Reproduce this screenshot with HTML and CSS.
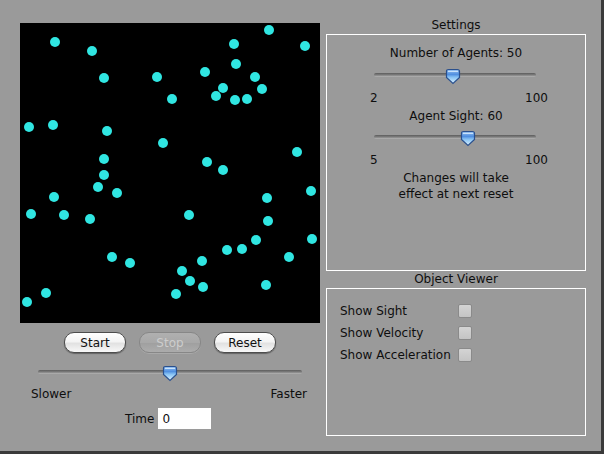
FILE: index.html
```html
<!DOCTYPE html>
<html>
<head>
<meta charset="utf-8">
<link rel="stylesheet" href="styles.css">
</head>
<body>
<div class="window">
  <div class="left">
    <div class="world">
      <svg width="300" height="300" viewBox="0 0 300 300">
        <g fill="#30e6e2">
          <circle cx="35" cy="19" r="5"/><circle cx="72" cy="28" r="5"/><circle cx="84" cy="55" r="5"/>
          <circle cx="137" cy="54" r="5"/><circle cx="152" cy="76" r="5"/><circle cx="214" cy="21" r="5"/>
          <circle cx="249" cy="7" r="5"/><circle cx="285" cy="23" r="5"/><circle cx="216" cy="41" r="5"/>
          <circle cx="185" cy="49" r="5"/><circle cx="235" cy="54" r="5"/><circle cx="203" cy="65" r="5"/>
          <circle cx="242" cy="66" r="5"/><circle cx="196" cy="73" r="5"/><circle cx="215" cy="77" r="5"/>
          <circle cx="227" cy="76" r="5"/><circle cx="9" cy="104" r="5"/><circle cx="33" cy="102" r="5"/>
          <circle cx="87" cy="108" r="5"/><circle cx="143" cy="120" r="5"/><circle cx="277" cy="129" r="5"/>
          <circle cx="187" cy="139" r="5"/><circle cx="203" cy="147" r="5"/><circle cx="84" cy="136" r="5"/>
          <circle cx="84" cy="152" r="5"/><circle cx="78" cy="164" r="5"/><circle cx="97" cy="170" r="5"/>
          <circle cx="34" cy="174" r="5"/><circle cx="291" cy="168" r="5"/><circle cx="247" cy="175" r="5"/>
          <circle cx="11" cy="191" r="5"/><circle cx="44" cy="192" r="5"/><circle cx="70" cy="196" r="5"/>
          <circle cx="169" cy="192" r="5"/><circle cx="248" cy="198" r="5"/><circle cx="236" cy="217" r="5"/>
          <circle cx="292" cy="216" r="5"/><circle cx="207" cy="227" r="5"/><circle cx="222" cy="226" r="5"/>
          <circle cx="269" cy="234" r="5"/><circle cx="92" cy="234" r="5"/><circle cx="110" cy="240" r="5"/>
          <circle cx="182" cy="238" r="5"/><circle cx="162" cy="248" r="5"/><circle cx="170" cy="258" r="5"/>
          <circle cx="183" cy="264" r="5"/><circle cx="156" cy="271" r="5"/><circle cx="246" cy="262" r="5"/>
          <circle cx="26" cy="270" r="5"/><circle cx="7" cy="279" r="5"/>
        </g>
      </svg>
    </div>

    <div class="controls">
      <button class="btn">Start</button>
      <button class="btn" disabled>Stop</button>
      <button class="btn">Reset</button>
    </div>

    <div class="slider speed">
      <div class="track"></div>
      <svg class="thumb" style="left: 50%" width="16" height="17" viewBox="0 0 16 17"><use href="#knob"/></svg>
    </div>
    <div class="ends speed-ends"><span>Slower</span><span>Faster</span></div>

    <div class="time">
      <label>Time</label>
      <input type="text" value="0">
    </div>
  </div>

  <div class="right">
    <div class="legend">Settings</div>
    <div class="box settings">
      <div class="line">Number of Agents: 50</div>
      <div class="slider small">
        <div class="track"></div>
        <svg class="thumb" style="left: 49%" width="16" height="17" viewBox="0 0 16 17"><use href="#knob"/></svg>
      </div>
      <div class="ends small-ends"><span>2</span><span>100</span></div>
      <div class="line tight">Agent Sight: 60</div>
      <div class="slider small second">
        <div class="track"></div>
        <svg class="thumb" style="left: 58%" width="16" height="17" viewBox="0 0 16 17"><use href="#knob"/></svg>
      </div>
      <div class="ends small-ends"><span>5</span><span>100</span></div>
      <div class="line tight">Changes will take<br>effect at next reset</div>
    </div>

    <div class="legend">Object Viewer</div>
    <div class="box viewer">
      <div class="opt"><span>Show Sight</span><i class="check"></i></div>
      <div class="opt"><span>Show Velocity</span><i class="check"></i></div>
      <div class="opt"><span>Show Acceleration</span><i class="check"></i></div>
    </div>
  </div>
</div>

<svg width="0" height="0" class="defs">
  <defs>
    <linearGradient id="knobfill" x1="0" y1="0" x2="0" y2="1">
      <stop offset="0" stop-color="#9cc6f2"/>
      <stop offset="0.35" stop-color="#4f8ee0"/>
      <stop offset="0.55" stop-color="#86c2f4"/>
      <stop offset="1" stop-color="#dff4ff"/>
    </linearGradient>
    <g id="knob">
      <path d="M1.5 3.5 Q1.5 1.5 3.5 1.5 H12.5 Q14.5 1.5 14.5 3.5 V9.5 L8 15.5 L1.5 9.5 Z" fill="url(#knobfill)" stroke="#2a4f8c" stroke-width="1.2"/>
      <path d="M3 3.5 H13" stroke="#c9e2fa" stroke-width="1"/>
    </g>
  </defs>
</svg>
</body>
</html>
```

FILE: styles.css
```css
* {
  margin: 0px;
  padding: 0px;
  box-sizing: border-box;
}
body {
  background: #3a3a3a;
  width: 604px;
  height: 454px;
  overflow: hidden;
  font-family: "DejaVu Sans", "Liberation Sans", sans-serif;
  font-size: 12px;
  color: #0e0e0e;
}
.window {
  width: 601px;
  height: 451px;
  background: #9a9a9a;
  display: flex;
}
.defs {
  position: absolute;
}

/* left side */
.left {
  width: 320px;
  padding: 23px 0 0 20px;
  display: flex;
  flex-direction: column;
}
.world {
  width: 300px;
  height: 300px;
  background: #000;
}
.world svg {
  display: block;
}
.controls {
  display: flex;
  gap: 13px;
  margin: 9px 0 0 44px;
}
.btn {
  width: 62px;
  height: 21px;
  border-radius: 10px;
  border: 1px solid #4d4d4d;
  background: linear-gradient(#ffffff, #f4f4f4 45%, #e2e2e2 55%, #f8f8f8);
  box-shadow: 0 1px 1px rgba(0, 0, 0, 0.35);
  font-family: inherit;
  font-size: 12px;
  color: #111;
}
.btn:disabled {
  border-color: #878787;
  background: linear-gradient(#b0b0b0, #a8a8a8 50%, #a0a0a0 55%, #acacac);
  color: #cdcdcd;
  box-shadow: 0 1px 0 rgba(255, 255, 255, 0.15);
}

.slider {
  position: relative;
  height: 17px;
}
.track {
  position: absolute;
  left: 0;
  right: 0;
  top: 5px;
  height: 4px;
  border-radius: 2px;
  background: linear-gradient(#5c5c5c, #7e7e7e 50%, #b8b8b8);
}
.thumb {
  position: absolute;
  top: 0;
  margin-left: -8px;
}
.speed {
  margin: 12px 0 0 18px;
  width: 264px;
}
.ends {
  display: flex;
  justify-content: space-between;
}
.speed-ends {
  margin: 4px 0 0 11px;
  width: 276px;
  line-height: 16px;
}
.time {
  display: flex;
  align-items: center;
  gap: 4px;
  margin: 6px 0 0 105px;
}
.time input {
  width: 53px;
  height: 21px;
  border: none;
  background: #fff;
  padding-left: 4px;
  font-family: inherit;
  font-size: 12px;
  color: #111;
  outline: none;
}

/* right side */
.right {
  width: 260px;
  margin-left: 6px;
  padding-top: 17px;
  display: flex;
  flex-direction: column;
}
.legend {
  text-align: center;
  line-height: 16px;
  height: 16px;
  margin-bottom: 1px;
}
.box {
  border: 1px solid #fff;
}
.settings {
  height: 237px;
  padding-top: 10px;
  text-align: center;
}
.line {
  line-height: 16px;
}
.line.tight {
  margin-top: 2px;
}
.small {
  width: 162px;
  margin: 7px 0 0 47px;
}
.small.second {
  margin-top: 6px;
}
.small-ends {
  width: 178px;
  margin: 5px 0 0 43px;
  line-height: 16px;
}
.viewer {
  height: 148px;
  padding: 11px 0 0 13px;
}
.opt {
  display: flex;
  align-items: center;
  height: 22px;
}
.opt span {
  width: 118px;
}
.check {
  width: 14px;
  height: 14px;
  border: 1px solid #8a8a8a;
  border-radius: 2px;
  background: linear-gradient(#d4d4d4, #c4c4c4);
}
```
